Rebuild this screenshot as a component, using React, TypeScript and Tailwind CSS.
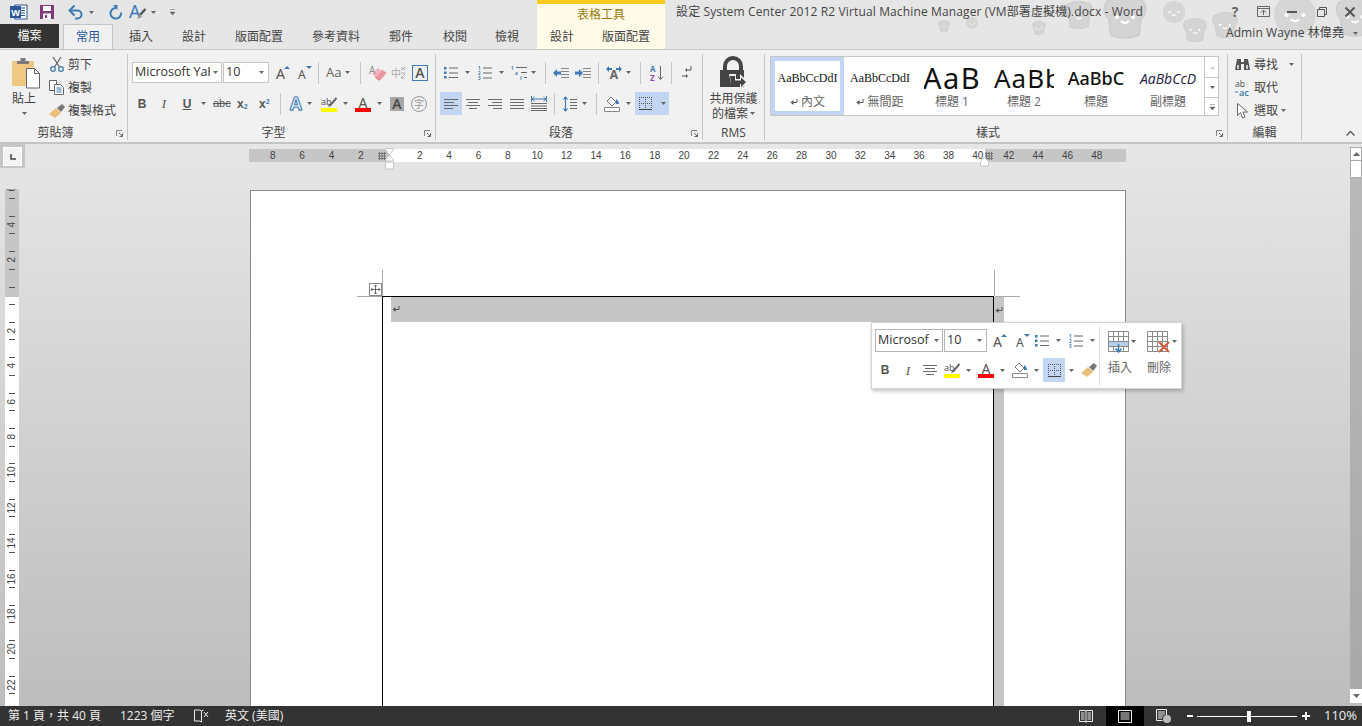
import React from "react";

type P = { w: number; h: number; children: React.ReactNode; className?: string };
const I = ({ w, h, children, className }: P) => (
  <svg width={w} height={h} viewBox={`0 0 ${w} ${h}`} className={`flex-none overflow-visible ${className ?? ""}`}>{children}</svg>
);
const Caret = ({ className = "" }: { className?: string }) => (
  <I w={5} h={3} className={className}><path d="M0 0h5L2.5 3z" fill="#666" /></I>
);
const Sep = ({ className = "" }: { className?: string }) => <div className={`w-px h-[22px] bg-[#c6c6c6] flex-none ${className}`} />;
const F = "Noto Sans, sans-serif";

const Word = () => (
  <I w={17} h={16}>
    <rect x="5" y="1" width="12" height="14" fill="#fff" stroke="#2b579a" />
    <path d="M10 4h5M10 6.5h5M10 9h5M10 11.5h5" stroke="#2b579a" />
    <rect x="0" y="2" width="11" height="12" fill="#2b579a" />
    <text x="5.5" y="11.5" fontSize="9" fontWeight="700" fill="#fff" textAnchor="middle" fontFamily={F}>W</text>
  </I>
);
const Save = () => (
  <I w={14} h={14}>
    <path d="M0 0h14v14H0z" fill="#80397b" />
    <rect x="3" y="1" width="8" height="5" fill="#fff" />
    <rect x="3" y="8.5" width="8" height="5.5" fill="#fff" />
    <rect x="5" y="10" width="2" height="3" fill="#80397b" />
  </I>
);
const Undo = () => (
  <I w={14} h={14}>
    <path d="M1.5 5.5h7a4 4 0 0 1 0 8H6" fill="none" stroke="#3e7bb5" strokeWidth="2" />
    <path d="M5.5 .5L.5 5.5l5 5" fill="none" stroke="#3e7bb5" strokeWidth="2" />
  </I>
);
const Redo = () => (
  <I w={13} h={14}>
    <path d="M7 3A5.300 5.300 0 1 0 12 7.500" fill="none" stroke="#3e7bb5" strokeWidth="2" />
    <path d="M4 0h4.500v5z" fill="#3e7bb5" />
  </I>
);
const ABrush = () => (
  <I w={16} h={17}>
    <text x="-1" y="14" fontSize="18" fill="#3e7bb5" fontFamily={F}>A</text>
    <path d="M15.500 5L10 11" stroke="#555" strokeWidth="2.500" />
    <path d="M10 10l-3 5 5-2z" fill="#999" />
  </I>
);
const More = () => (
  <I w={5} h={6}><path d="M0 .5h5M0 3h5L2.5 6z" fill="#666" stroke="#666" strokeWidth=".5" /></I>
);
const Paste = () => (
  <I w={28} h={31}>
    <rect x="0" y="3" width="22" height="25" fill="#efc881" />
    <path d="M5 3h12v3H5z" fill="#7a7a7a" />
    <rect x="8.5" y="0" width="5" height="4" fill="#7a7a7a" />
    <path d="M14.5 10.5h8l5 5v14.5h-13z" fill="#fff" stroke="#666" />
    <path d="M22.5 10.5v5h5" fill="none" stroke="#666" />
  </I>
);
const Scissors = () => (
  <I w={14} h={15}>
    <circle cx="3" cy="12" r="2.3" fill="none" stroke="#3e7bb5" strokeWidth="1.3" />
    <circle cx="11" cy="12" r="2.3" fill="none" stroke="#3e7bb5" strokeWidth="1.3" />
    <path d="M4.5 10L11 0M9.5 10L3 0" stroke="#666" strokeWidth="1.3" />
  </I>
);
const Copy = () => (
  <I w={15} h={15}>
    <path d="M.5.5h7v10h-7z" fill="#fff" stroke="#666" />
    <path d="M5.5 4.5h6l3 3v7h-9z" fill="#fff" stroke="#666" />
    <path d="M7.5 8h5M7.5 10h5M7.5 12h5" stroke="#3e7bb5" />
  </I>
);
const Brush = () => (
  <I w={16} h={14}>
    <path d="M0 10l7-6 5 5-6 5z" fill="#e8bf7d" />
    <path d="M8 4l5-4 3 3-4 5z" fill="#777" />
  </I>
);
const Grow = ({ up = true }: { up?: boolean }) => (
  <I w={14} h={16}>
    <text x="0" y="14" fontSize={up ? 14 : 12} fill="#555" fontFamily={F}>A</text>
    <path d={up ? "M8 4l3-3 3 3z" : "M8 1h6l-3 3z"} fill="#3e7bb5" />
  </I>
);
const Eraser = () => (
  <I w={17} h={16}>
    <path d="M6 12l7-7 4 3-6 7H9z" fill="#e8969f" stroke="#e8969f" />
    <path d="M3 9l6-6 4 3-6 6z" fill="#f2b5bb" />
    <text x="0" y="9" fontSize="10" fill="#8f8f8f" fontFamily={F}>A</text>
  </I>
);
const Boxed = () => (
  <div className="w-4 h-4 border border-[#3e7bb5] flex items-center justify-center text-[14px] leading-none text-[#555] font-semibold flex-none">A</div>
);
const AOutline = () => (
  <I w={14} h={15}>
    <text x="7" y="14" fontSize="17" fill="#fff" stroke="#3e7bb5" strokeWidth="1.1" fontWeight="700" textAnchor="middle" fontFamily={F}>A</text>
  </I>
);
const Highlight = () => (
  <I w={16} h={16}>
    <text x="0" y="9" fontSize="9" fill="#555" fontFamily={F}>ab</text>
    <path d="M15 1L8 9l-1 2 3-1 6-7z" fill="#666" />
    <rect x="0" y="12" width="16" height="4" fill="#ffff00" />
  </I>
);
const ARed = () => (
  <I w={16} h={16}>
    <text x="8" y="11.5" fontSize="14" fill="#555" textAnchor="middle" fontFamily={F}>A</text>
    <rect x="0" y="12" width="16" height="4" fill="#f00" />
  </I>
);
const AShade = () => (
  <div className="w-[14px] h-[14px] bg-[#a6a6a6] flex items-center justify-center text-[14px] leading-none font-semibold text-[#444] flex-none">A</div>
);
const Circle = () => (
  <div className="w-4 h-4 rounded-full border border-[#999] flex items-center justify-center text-[10px] leading-none text-[#999] flex-none">字</div>
);
const Bullets = () => (
  <I w={14} h={15}>
    <path d="M0 2h2.5v2.5H0zM0 6.5h2.5V9H0zM0 11h2.5v2.5H0z" fill="#3e7bb5" />
    <path d="M5 3h9M5 8h9M5 12.500h9" stroke="#666" />
  </I>
);
const Numbered = () => (
  <I w={14} h={15}>
    <text x="0" y="4.500" fontSize="4.500" fontWeight="700" fill="#3e7bb5" fontFamily={F}>1</text>
    <text x="0" y="9.500" fontSize="4.500" fontWeight="700" fill="#3e7bb5" fontFamily={F}>2</text>
    <text x="0" y="14.500" fontSize="4.500" fontWeight="700" fill="#3e7bb5" fontFamily={F}>3</text>
    <path d="M5 3h9M5 8h9M5 13h9" stroke="#666" />
  </I>
);
const Multi = () => (
  <I w={16} h={16}>
    <text x="0" y="4.500" fontSize="4.500" fontWeight="700" fill="#3e7bb5" fontFamily={F}>1</text>
    <text x="4" y="9.500" fontSize="4.500" fontWeight="700" fill="#3e7bb5" fontFamily={F}>a</text>
    <text x="9" y="14.500" fontSize="4.500" fontWeight="700" fill="#3e7bb5" fontFamily={F}>i</text>
    <path d="M5 2.500h11M10 7.500h6M13 12.500h3" stroke="#666" />
  </I>
);
const Indent = ({ rev = false }: { rev?: boolean }) => (
  <I w={16} h={10}>
    <path d="M8 .5h8M8 3.500h8M8 6.500h8M8 9.500h8" stroke="#888" />
    <path d={rev ? "M0 5l4-4v2.500h4v3H4V9z" : "M8 5L4 1v2.500H0v3h4V9z"} fill="#3e7bb5" />
  </I>
);
const Dir = () => (
  <I w={16} h={14}>
    <text x="8" y="13" fontSize="12" fontWeight="700" fill="#666" textAnchor="middle" fontFamily={F}>A</text>
    <path d="M0 3l3-3v2h3v2H3v2zM16 3l-3-3v2h-3v2h3v2z" fill="#3e7bb5" />
  </I>
);
const Sort = () => (
  <I w={14} h={16}>
    <text x="0" y="7" fontSize="8" fontWeight="700" fill="#3e7bb5" fontFamily={F}>A</text>
    <text x="0" y="15.500" fontSize="8" fontWeight="700" fill="#8a4fb5" fontFamily={F}>Z</text>
    <path d="M10.500 1v13M8 11.500l2.500 3 2.500-3" fill="none" stroke="#666" />
  </I>
);
const Pilcrow = () => (
  <I w={10} h={13}>
    <path d="M9 0v4H4" fill="none" stroke="#555" />
    <path d="M5 2L3 4l2 2z" fill="#555" />
    <path d="M0 10h5" stroke="#555" />
    <path d="M4 8l2 2-2 2z" fill="#555" />
  </I>
);
const Align = ({ kind }: { kind: "l" | "c" | "r" | "j" }) => {
  const d = {
    l: "M0 .5h14M0 3.500h10M0 6.500h14M0 9.500h9",
    c: "M0 .5h14M2 3.500h10M0 6.500h14M3 9.500h8",
    r: "M0 .5h14M4 3.500h10M0 6.500h14M5 9.500h9",
    j: "M0 .5h14M0 3.500h14M0 6.500h14M0 9.500h14",
  }[kind];
  return <I w={14} h={10}><path d={d} stroke="#6b6b6b" /></I>;
};
const Dist = () => (
  <I w={16} h={15}>
    <path d="M.5 0v6M15.500 0v6" stroke="#3e7bb5" />
    <path d="M1 3h14M3.500 1L1 3l2.500 2M12.500 1L15 3l-2.500 2" fill="none" stroke="#3e7bb5" />
    <path d="M0 7.500h16M0 10h16M0 12.500h16M0 14.500h16" stroke="#6b6b6b" />
  </I>
);
const LineSp = () => (
  <I w={14} h={16}>
    <path d="M2.500 1v14M.5 3.500l2-2.500 2 2.500M.5 12.500l2 2.500 2-2.500" fill="none" stroke="#3e7bb5" strokeWidth="1.200" />
    <path d="M7 3.500h7M7 6.500h7M7 9.500h7M7 12.500h7" stroke="#6b6b6b" />
  </I>
);
const Shading = () => (
  <I w={16} h={16}>
    <path d="M7 1l5 5-4 4-5-5z" fill="#fff" stroke="#777" />
    <path d="M12 3c2 1 3 3 3 5h-3z" fill="#3e7bb5" />
    <path d="M.5 11.500h15v4H.5z" fill="#fff" stroke="#888" />
  </I>
);
const Borders = () => (
  <I w={13} h={13}>
    <path d="M.5 0v12M12.500 0v12M0 .5h13" stroke="#555" strokeDasharray="1 1" />
    <path d="M0 6.500h13M6.500 0v12" stroke="#555" strokeDasharray="1 1" />
    <path d="M0 12.500h13" stroke="#444" />
  </I>
);
const Lock = () => (
  <I w={28} h={32}>
    <path d="M5 13V8a8 8 0 0 1 16 0v5" fill="none" stroke="#444" strokeWidth="4" />
    <path d="M0 12h24v17H0z" fill="#444" />
    <path d="M9 16h7v5h4v-5l8 8-8 8v-6h-9z" fill="#f1f1f1" />
    <path d="M10 18h5v4.500h6v-3l5 4.500-5 5v-3h-10z" fill="#444" />
  </I>
);
const Bino = () => (
  <I w={15} h={13}>
    <path d="M2 1h4v3h3V1h4l2 11H9V6H6v6H0z" fill="#555" />
    <path d="M2 7h2v4H2zM11 7h2v4h-2z" fill="#ccc" />
  </I>
);
const AbAc = () => (
  <I w={16} h={16}>
    <text x="0" y="7" fontSize="8.500" fill="#555" fontFamily={F}>ab</text>
    <text x="4" y="15.500" fontSize="9" fontWeight="600" fill="#3e7bb5" fontFamily={F}>ac</text>
    <path d="M0 12h3" stroke="#3e7bb5" />
  </I>
);
const Cursor = () => (
  <I w={11} h={16}>
    <path d="M.5.5v12l3-3 2 5.500 2.500-1-2-5h4.500z" fill="#fff" stroke="#666" />
  </I>
);
const Launcher = () => (
  <I w={7} h={7}>
    <path d="M.5 6V.5H6" fill="none" stroke="#888" />
    <path d="M3 3l3.500 3.500M6.500 3.500v3h-3" fill="none" stroke="#666" />
  </I>
);
const Mark = () => (
  <I w={8} h={7}>
    <path d="M7 0v3.500H2" fill="none" stroke="#555" />
    <path d="M3.500 1L.5 3.500 3.500 6z" fill="#555" />
  </I>
);
const Grid = () => (
  <I w={8} h={8} className="opacity-70">
    <path d="M0 1.500h8M0 4h8M0 6.500h8M1.500 0v8M4 0v8M6.500 0v8" stroke="#555" />
  </I>
);
const TableIcon = ({ kind }: { kind: "ins" | "del" }) => (
  <I w={24} h={22}>
    <path d="M.5.5h20v20H.5zM.5 5.500h20M.5 10.500h20M.5 15.500h20M5.500.5v20M10.500.5v20M15.500.5v20" fill="none" stroke="#8a8a8a" />
    {kind === "ins" ? (
      <>
        <rect x="1" y="11" width="19" height="4" fill="#b7cdea" />
        <path d="M10.500 13v7M7.500 17.500l3 3.500 3-3.500" fill="none" stroke="#3e7bb5" strokeWidth="1.500" />
      </>
    ) : (
      <path d="M12 11l10 10M22 11L12 21" stroke="#d9573c" strokeWidth="2" />
    )}
  </I>
);

const Cell = ({ n }: { n: number }) => (
  <div className="w-[29.38px] flex-none text-center text-[10px] leading-[13px] text-[#444] font-['Liberation_Sans',sans-serif]">{n}</div>
);

const Tab = ({ t, c, cls = "" }: { t: string; c: string; cls?: string }) => (
  <div className={`${c} flex-none flex items-center justify-center text-[12px] text-[#444] ${cls}`}>{t}</div>
);

const Toast = ({ x, y, s, apple }: { x: number; y: number; s: number; apple?: boolean }) => (
  <g transform={`translate(${x} ${y}) scale(${s})`}>
    {apple ? <circle r="10" fill="#d6d6d6" /> : <path d="M-9-8q9-5 18 0q3 5-1 9l-1 8q-7 3-14 0l-1-8q-4-4-1-9z" fill="#d4d4d4" stroke="#cfcfcf" />}
    <circle cx="-4" cy="0" r="1" fill="#fff" />
    <circle cx="4" cy="0" r="1" fill="#fff" />
    <path d="M-2 2q2 2 4 0" fill="none" stroke="#fff" />
  </g>
);

const Group = ({ c, label, launcher = true, children }: { c: string; label: string; launcher?: boolean; children: React.ReactNode }) => (
  <div className={`${c} h-[86px] flex-none flex flex-col border-r border-[#c6c6c6]`}>
    {children}
    <div className="mt-auto h-[16px] -mb-[1px] flex items-center text-[12px] text-[#444]">
      <div className="flex-1 text-center leading-none">{label}</div>
      {launcher && <div className="w-4 flex items-center justify-center"><Launcher /></div>}
    </div>
  </div>
);

const Small = ({ icon, t, after }: { icon: React.ReactNode; t: string; after?: React.ReactNode }) => (
  <div className="h-[23px] flex items-center text-[12px] text-[#444]">
    <div className="w-[17px] flex justify-center flex-none">{icon}</div>
    <div className="ml-[3px]">{t}</div>
    {after}
  </div>
);

const StyleItem = ({ s, l, sel = false, c, mark = false, inner = "w-full" }: { s: string; l: string; sel?: boolean; c: string; mark?: boolean; inner?: string }) => (
  <div className={`${sel ? "w-[73px] border-[4px] border-[#c2d5f2]" : "w-[72px] border-[4px] border-white"} flex-none h-full flex flex-col items-center overflow-hidden bg-white`}>
    <div className={`mt-[2px] h-[30px] ${inner} flex items-center justify-center overflow-hidden whitespace-nowrap ${c}`}>{s}</div>
    <div className="text-[12px] leading-[16px] text-[#666] mt-[1px] whitespace-nowrap flex items-center gap-[3px]">{mark && <Mark />}{l}</div>
  </div>
);

const VCell = ({ n }: { n?: number }) => (
  <div className="h-[35.38px] flex-none flex flex-col items-center justify-center">
    <div className="w-[6px] h-px bg-[#555]" />
    <div className="h-[16.6px] flex items-center justify-center text-[10px] leading-none text-[#444] [writing-mode:vertical-rl] rotate-180">{n ?? ""}</div>
    <div className="w-[6px] h-px bg-[#555]" />
  </div>
);

export default function App() {
  const left = [8, 6, 4, 2];
  const mid = Array.from({ length: 20 }, (_, i) => (i + 1) * 2);
  const right = [42, 44, 46, 48];
  return (
    <div className="w-[1362px] h-[726px] overflow-hidden flex flex-col font-['Open_Sans','Noto_Sans_CJK_TC',sans-serif] bg-[#e6e6e6] relative">
      {/* header */}
      <div className="relative h-[50px] flex-none flex bg-[#e6e6e6] border-b border-[#c6c6c6]">
        <svg width="480" height="50" viewBox="0 0 480 50" className="absolute right-0 top-0">
          <Toast x={62} y={26} s={0.55} />
          <Toast x={90} y={23} s={0.6} apple />
          <Toast x={157} y={28} s={0.65} />
          <Toast x={197} y={15} s={1.3} />
          <Toast x={243} y={17} s={2} />
          <Toast x={292} y={12} s={1.1} apple />
          <Toast x={313} y={30} s={1.1} />
          <Toast x={343} y={25} s={1.2} />
          <Toast x={413} y={15} s={2.1} apple />
          <Toast x={473} y={17} s={1.8} />
        </svg>
        <div className="w-[537px] flex-none flex flex-col relative">
          <div className="h-[25px] flex items-center pl-[10px]">
            <Word />
            <div className="ml-[13px]"><Save /></div>
            <div className="ml-[15px]"><Undo /></div>
            <Caret className="ml-[6px]" />
            <div className="ml-[15px]"><Redo /></div>
            <div className="ml-[8px]"><ABrush /></div>
            <Caret className="ml-[5px]" />
            <div className="ml-[14px] flex"><More /></div>
          </div>
          <div className="h-[25px] flex">
            <div className="w-[59px] h-[24px] flex-none bg-[#333] text-white text-[12px] flex items-center justify-center">檔案</div>
            <div className="ml-[4px] w-[50px] h-[25px] flex-none bg-[#f1f1f1] border border-b-0 border-[#c6c6c6] text-[#2b579a] text-[12px] flex items-center justify-center">常用</div>
            <Tab t="插入" c="w-[56px]" />
            <Tab t="設計" c="w-[50px]" />
            <Tab t="版面配置" c="w-[80px]" />
            <Tab t="參考資料" c="w-[74px]" />
            <Tab t="郵件" c="w-[56px]" />
            <Tab t="校閱" c="w-[52px]" />
            <Tab t="檢視" c="w-[52px]" />
          </div>
        </div>
        <div className="w-[128px] flex-none flex flex-col bg-[#fffbe8] border-t-4 border-[#f5cc1f] relative">
          <div className="h-[21px] flex items-center justify-center text-[12px] text-[#a07a12]">表格工具</div>
          <div className="h-[24px] flex">
            <Tab t="設計" c="w-[50px]" />
            <Tab t="版面配置" c="w-[78px]" />
          </div>
        </div>
        <div className="flex-1 flex flex-col relative min-w-0">
          <div className="h-[23px] flex items-center">
            <div className="ml-[11px] flex-1 text-[12px] tracking-[0.13px] text-[#444] whitespace-nowrap">設定 System Center 2012 R2 Virtual Machine Manager (VM部署虛擬機).docx - Word</div>
            <div className="w-[28px] flex justify-center text-[14px] font-bold text-[#666]">?</div>
            <div className="w-[28px] flex justify-center">
              <I w={13} h={11}><path d="M.5.5h12v10H.5zM.5 2.500h12" fill="none" stroke="#666" /><path d="M6.500 9V4.500M4 6.500l2.500-2.500L9 6.500" fill="none" stroke="#666" /></I>
            </div>
            <div className="w-[29px] flex justify-center"><I w={10} h={2}><rect width="10" height="2" fill="#555" /></I></div>
            <div className="w-[31px] flex justify-center">
              <I w={10} h={10}><path d="M.5 2.500h7v7h-7zM2.500 2.500v-2h7v7h-2" fill="none" stroke="#555" /></I>
            </div>
            <div className="w-[25px] flex justify-center">
              <I w={10} h={10}><path d="M.5.5l9 9M9.500.5l-9 9" stroke="#555" strokeWidth="2" /></I>
            </div>
          </div>
          <div className="h-[20px] flex items-center justify-end pr-[4px]">
            <span className="text-[12px] text-[#444] whitespace-nowrap tracking-[0.1px]">Admin Wayne 林偉堯</span>
            <Caret className="ml-[9px]" />
          </div>
        </div>
      </div>

      {/* ribbon */}
      <div className="h-[94px] flex-none bg-[#f1f1f1] border-b-2 border-[#c4c4c4] flex pt-[4px] relative">
        <Group c="w-[128px]" label="剪貼簿">
          <div className="flex">
            <div className="w-[48px] flex flex-col items-center">
              <div className="mt-[4px] ml-[4px]"><Paste /></div>
              <div className="text-[12px] leading-[16px] text-[#444] mt-[2px]">貼上</div>
              <Caret className="mt-[5px]" />
            </div>
            <div className="flex flex-col -mt-[1px]">
              <Small icon={<Scissors />} t="剪下" />
              <Small icon={<Copy />} t="複製" />
              <Small icon={<Brush />} t="複製格式" />
            </div>
          </div>
        </Group>

        <Group c="w-[308px]" label="字型">
          <div className="mt-[8px] h-[21px] flex items-center">
            <div className="ml-[4px] w-[90px] h-[21px] flex-none bg-white border border-[#c6c6c6] flex items-center pl-[2px] text-[12.500px] text-[#333] overflow-hidden whitespace-nowrap">
              <span className="w-[75px] overflow-hidden">Microsoft YaHei</span><Caret className="ml-[3px]" />
            </div>
            <div className="ml-px w-[46px] h-[21px] flex-none bg-white border border-[#c6c6c6] flex items-center pl-[2px] text-[12.500px] text-[#333]">
              10<Caret className="ml-auto mr-[4px]" />
            </div>
            <div className="ml-[7px]"><Grow /></div>
            <div className="ml-[8px]"><Grow up={false} /></div>
            <Sep className="ml-[6px]" />
            <div className="ml-[7px] w-[15px] text-[13px] text-[#666] leading-none whitespace-nowrap">Aa</div>
            <Caret className="ml-[4px]" />
            <Sep className="ml-[10px]" />
            <div className="ml-[8px]"><Eraser /></div>
            <div className="ml-[5px] w-[15px] flex items-center text-[10px] leading-none text-[#aaa] whitespace-nowrap">
              中
              <I w={5} h={13}><path d="M0 1l4 3M4 1L0 4M0 7h4M0 12l4-4M0 12h4" fill="none" stroke="#aaa" /></I>
            </div>
            <div className="ml-[6px]"><Boxed /></div>
          </div>
          <div className="mt-[9px] h-[23px] flex items-center text-[#555]">
            <div className="ml-[9px] w-[10px] text-[12px] font-bold text-center leading-none font-['Liberation_Sans',sans-serif]">B</div>
            <div className="ml-[13px] w-[8px] text-[13px] italic text-center leading-none font-['Liberation_Serif',serif]">I</div>
            <div className="ml-[14px] w-[10px] text-[12px] font-bold underline text-center leading-none font-['Liberation_Sans',sans-serif]">U</div>
            <Caret className="ml-[9px]" />
            <div className="ml-[7px] w-[16px] text-[11px] line-through leading-none text-center font-['Liberation_Sans',sans-serif]">abc</div>
            <div className="ml-[8px] w-[13px] text-[12px] font-bold leading-none whitespace-nowrap font-['Liberation_Sans',sans-serif]">x<sub className="text-[7px] text-[#3e7bb5]">2</sub></div>
            <div className="ml-[9px] w-[13px] text-[12px] font-bold leading-none whitespace-nowrap font-['Liberation_Sans',sans-serif]">x<sup className="text-[7px] text-[#3e7bb5]">2</sup></div>
            <Sep className="ml-[8px]" />
            <div className="ml-[8px]"><AOutline /></div>
            <Caret className="ml-[4px]" />
            <div className="ml-[9px]"><Highlight /></div>
            <Caret className="ml-[6px]" />
            <div className="ml-[7px]"><ARed /></div>
            <Caret className="ml-[6px]" />
            <div className="ml-[8px]"><AShade /></div>
            <div className="ml-[7px]"><Circle /></div>
          </div>
        </Group>

        <Group c="w-[267px]" label="段落">
          <div className="mt-[8px] h-[21px] flex items-center">
            <div className="ml-[8px]"><Bullets /></div>
            <Caret className="ml-[7px]" />
            <div className="ml-[8px]"><Numbered /></div>
            <Caret className="ml-[7px]" />
            <div className="ml-[7px]"><Multi /></div>
            <Caret className="ml-[4px]" />
            <Sep className="ml-[9px]" />
            <div className="ml-[7px]"><Indent rev /></div>
            <div className="ml-[6px]"><Indent /></div>
            <Sep className="ml-[7px]" />
            <div className="ml-[7px]"><Dir /></div>
            <Caret className="ml-[4px]" />
            <Sep className="ml-[9px]" />
            <div className="ml-[9px]"><Sort /></div>
            <Sep className="ml-[7px]" />
            <div className="ml-[10px]"><Pilcrow /></div>
          </div>
          <div className="mt-[9px] h-[23px] flex items-center">
            <div className="ml-[4px] w-[22px] h-[23px] bg-[#c2d5f2] flex items-center justify-center flex-none"><Align kind="l" /></div>
            <div className="ml-[4px]"><Align kind="c" /></div>
            <div className="ml-[8px]"><Align kind="r" /></div>
            <div className="ml-[8px]"><Align kind="j" /></div>
            <div className="ml-[7px]"><Dist /></div>
            <Sep className="ml-[7px]" />
            <div className="ml-[8px]"><LineSp /></div>
            <Caret className="ml-[5px]" />
            <Sep className="ml-[9px]" />
            <div className="ml-[7px]"><Shading /></div>
            <Caret className="ml-[6px]" />
            <div className="ml-[4px] w-[34px] h-[23px] bg-[#c2d5f2] flex items-center flex-none pl-[4px]"><Borders /><Caret className="ml-[9px]" /></div>
          </div>
        </Group>

        <Group c="w-[62px]" label="RMS" launcher={false}>
          <div className="flex flex-col items-center">
            <div className="mt-[4px]"><Lock /></div>
            <div className="text-[12px] leading-[15px] text-[#444] mt-[1px] whitespace-nowrap">共用保護</div>
            <div className="text-[12px] leading-[15px] text-[#444] flex items-center whitespace-nowrap">的檔案<Caret className="ml-[2px]" /></div>
          </div>
        </Group>

        <Group c="w-[463px]" label="樣式">
          <div className="ml-[5px] mt-[2px] w-[449px] h-[60px] flex-none border border-[#c6c6c6] bg-white flex">
            <StyleItem c="text-[12px] font-['Liberation_Serif',serif] text-[#111]" s="AaBbCcDdI" l="內文" mark sel />
            <StyleItem c="text-[12px] font-['Liberation_Serif',serif] text-[#111]" s="AaBbCcDdI" l="無間距" mark />
            <StyleItem c="text-[29px] font-['Noto_Sans',sans-serif] text-[#111] tracking-[1.500px]" inner="w-[56px]" s="AaB" l="標題 1" />
            <StyleItem c="text-[26px] font-['Noto_Sans',sans-serif] text-[#111] tracking-[1px] !justify-start" inner="w-[60px]" s="AaBb" l="標題 2" />
            <StyleItem c="text-[18px] font-['Noto_Sans',sans-serif] font-medium text-[#111]" s="AaBbC" l="標題" />
            <StyleItem c="text-[14px] italic font-['Open_Sans',sans-serif] text-[#224]" s="AaBbCcD" l="副標題" />
            <div className="ml-auto w-[15px] flex-none border-l border-[#c6c6c6] flex flex-col">
              <div className="h-[21px] border-b border-[#c6c6c6] flex items-center justify-center"><I w={5} h={3}><path d="M0 3h5L2.500 0z" fill="#ccc" /></I></div>
              <div className="h-[20px] border-b border-[#c6c6c6] flex items-center justify-center"><Caret /></div>
              <div className="flex-1 flex items-center justify-center"><More /></div>
            </div>
          </div>
        </Group>

        <Group c="w-[74px]" label="編輯" launcher={false}>
          <div className="flex flex-col -mt-[1px] pl-[6px]">
            <Small icon={<Bino />} t="尋找" after={<Caret className="ml-[11px]" />} />
            <Small icon={<AbAc />} t="取代" />
            <Small icon={<Cursor />} t="選取" after={<Caret className="ml-[3px]" />} />
          </div>
        </Group>

        <div className="flex-1 flex items-end justify-end pr-[7px] pb-[6px]">
          <I w={9} h={5}><path d="M.5 4.500l4-4 4 4" fill="none" stroke="#555" strokeWidth="1.300" /></I>
        </div>
      </div>

      {/* document */}
      <div className="flex-1 min-h-0 relative flex bg-[linear-gradient(to_bottom,#e6e6e6,#bdbdbd)] overflow-hidden">
        <div className="w-[249px] flex-none flex flex-col">
          <div className="w-[25px] h-[24px] bg-[#c6c6c6] pt-[3px] pl-[3px]">
            <div className="w-[19px] h-[19px] bg-[#f3f3f3] border border-white flex items-center justify-center">
              <I w={6} h={6}><path d="M1 0v5h5" fill="none" stroke="#444" strokeWidth="1.500" /></I>
            </div>
          </div>
          <div className="ml-[5px] mt-[21px] w-[14px] h-[517px] overflow-hidden bg-[linear-gradient(to_bottom,#c6c6c6_108px,#fff_108px)] font-['Liberation_Sans',sans-serif]">
            <div className="-mt-[17px]">
              <VCell n={6} /><VCell n={4} /><VCell n={2} /><VCell />
              {[2, 4, 6, 8, 10, 12, 14, 16, 18, 20, 22].map((n) => <VCell key={n} n={n} />)}
            </div>
          </div>
        </div>

        <div className="w-[877px] flex-none flex flex-col">
          <div className="mt-[5px] h-[13px] flex-none flex relative">
            <div className="w-[141px] bg-[#c6c6c6] flex pl-[9px] relative">
              {left.map((n) => <Cell key={n} n={n} />)}
              <div className="flex items-center ml-[2px]"><Grid /></div>
            </div>
            <div className="w-[595px] bg-white flex pl-[15px]">
              {mid.map((n) => <Cell key={n} n={n} />)}
            </div>
            <div className="flex-1 bg-[#c6c6c6] flex">
              <div className="w-[9px] flex-none flex items-center"><Grid /></div>
              {right.map((n) => <Cell key={n} n={n} />)}
            </div>
            <svg width="10" height="22" viewBox="0 0 10 22" className="absolute left-[136px] -top-[1px]">
              <path d="M.5.5h8v1L4.500 7 8.500 12v1h-8v-1L4.500 7 .5 1.500z" fill="#fff" stroke="#c6c6c6" />
              <path d="M.5 14h8v7h-8z" fill="#fff" stroke="#c6c6c6" />
            </svg>
            <svg width="10" height="10" viewBox="0 0 10 10" className="absolute left-[731px] top-[8px]">
              <path d="M.5 9V4.500L4.500 .5l4 4V9z" fill="#fff" stroke="#c6c6c6" />
            </svg>
          </div>
          <div className="ml-px mt-[28px] flex-1 bg-white border-l border-r border-t border-[#8a8a8a] relative">
            <div className="ml-[131px] mt-[105px] h-[500px] flex relative">
              <div className="w-[612px] flex-none border-[1.500px] border-b-0 border-black">
                <div className="ml-[7.500px] h-[25px] bg-[#c6c6c6] pl-px pt-[9px]"><Mark /></div>
              </div>
              <div className="w-[10px] flex-none bg-[#c6c6c6] mt-px pl-[1px] pt-[10px]"><Mark /></div>
              <div className="absolute -top-[26px] left-0 w-px h-[26px] bg-[#aaa]" />
              <div className="absolute top-0 -left-[25px] w-[25px] h-px bg-[#aaa]" />
              <div className="absolute -top-[26px] left-[612px] w-px h-[26px] bg-[#aaa]" />
              <div className="absolute top-0 left-[613px] w-[25px] h-px bg-[#aaa]" />
              <div className="absolute -top-[13px] -left-[13px] w-[13px] h-[13px] bg-white border border-[#888] flex items-center justify-center">
                <I w={9} h={9}><path d="M4.500 0v9M0 4.500h9M3 1.500L4.500 0 6 1.500M3 7.500L4.500 9 6 7.500M1.500 3L0 4.500 1.500 6M7.500 3L9 4.500 7.500 6" fill="none" stroke="#444" strokeWidth=".8" /></I>
              </div>
            </div>
          </div>
        </div>

        <div className="flex-1 flex justify-end">
          <div className="w-[12px] flex flex-col pt-[3px] pb-[3px] h-full">
            <div className="h-[14px] bg-white border border-[#aaa] flex items-center justify-center"><I w={7} h={4}><path d="M0 4h7L3.500 0z" fill="#666" /></I></div>
            <div className="h-[17px] bg-white border border-[#aaa] border-t-0" />
            <div className="flex-1 bg-[linear-gradient(to_bottom,#b9b9b9,#a9a9a9)]" />
            <div className="h-[14px] bg-white flex items-center justify-center"><I w={7} h={4}><path d="M0 0h7L3.500 4z" fill="#666" /></I></div>
          </div>
        </div>

        {/* mini toolbar */}
        <div className="absolute left-[871px] top-[178px] w-[311px] h-[67px] bg-white border border-[#d4d4d4] shadow-[1px_2px_4px_rgba(0,0,0,0.25)] flex">
          <div className="w-[227px] flex-none flex flex-col">
            <div className="mt-[6px] h-[23px] flex items-center">
              <div className="ml-[3px] w-[68px] h-[23px] flex-none border border-[#b5b5b5] flex items-center pl-[2px] text-[12.500px] text-[#333] overflow-hidden whitespace-nowrap">
                <span className="w-[51px] overflow-hidden">Microsoft</span><Caret className="ml-[5px]" />
              </div>
              <div className="ml-px w-[43px] h-[23px] flex-none border border-[#b5b5b5] flex items-center pl-[2px] text-[12.500px] text-[#333]">
                10<Caret className="ml-auto mr-[4px]" />
              </div>
              <div className="ml-[6px]"><Grow /></div>
              <div className="ml-[9px]"><Grow up={false} /></div>
              <div className="ml-[5px]"><Bullets /></div>
              <Caret className="ml-[7px]" />
              <div className="ml-[8px]"><Numbered /></div>
              <Caret className="ml-[7px]" />
            </div>
            <div className="mt-[6px] h-[24px] flex items-center text-[#555]">
              <div className="ml-[8px] w-[10px] text-[12px] font-bold text-center leading-none font-['Liberation_Sans',sans-serif]">B</div>
              <div className="ml-[14px] w-[8px] text-[13px] italic text-center leading-none font-['Liberation_Serif',serif]">I</div>
              <div className="ml-[11px]"><Align kind="c" /></div>
              <div className="ml-[7px]"><Highlight /></div>
              <Caret className="ml-[6px]" />
              <div className="ml-[7px]"><ARed /></div>
              <Caret className="ml-[6px]" />
              <div className="ml-[7px]"><Shading /></div>
              <Caret className="ml-[6px]" />
              <div className="ml-[4px] w-[22px] h-[24px] bg-[#c2d5f2] flex items-center justify-center flex-none"><Borders /></div>
              <Caret className="ml-[4px]" />
              <div className="ml-[7px]"><Brush /></div>
            </div>
          </div>
          <div className="w-px h-[59px] bg-[#e0e0e0] mt-[3px] flex-none" />
          <div className="flex ml-[8px]">
            <div className="w-[39px] flex flex-col">
              <div className="mt-[7px] h-[23px] flex items-center"><TableIcon kind="ins" /><Caret className="-ml-[1px]" /></div>
              <div className="text-[12px] leading-[16px] text-[#666] mt-[7px] whitespace-nowrap">插入</div>
            </div>
            <div className="w-[34px] flex flex-col">
              <div className="mt-[7px] h-[23px] flex items-center"><TableIcon kind="del" /><Caret className="ml-[1px]" /></div>
              <div className="text-[12px] leading-[16px] text-[#666] mt-[7px] whitespace-nowrap">刪除</div>
            </div>
          </div>
        </div>
      </div>

      {/* status bar */}
      <div className="h-[20px] flex-none bg-[#333] flex items-center text-[12px] text-[#eee] relative">
        <div className="ml-[8px] w-[112px] whitespace-nowrap">第 1 頁，共 40 頁</div>
        <div className="w-[74px] whitespace-nowrap">1223 個字</div>
        <I w={15} h={14}>
          <path d="M.5 1h5l2 1v11l-2-1h-5zM7.500 2l2-1" fill="none" stroke="#eee" />
          <path d="M10 3l4 5M14 3l-4 5" stroke="#eee" />
        </I>
        <div className="ml-[16px] whitespace-nowrap">英文 (美國)</div>
        <div className="ml-auto flex items-center h-full">
          <I w={14} h={13}>
            <path d="M.5.5h6l.5 1 .5-1h6v11h-6l-.5 1-.5-1h-6zM7 1.500v10" fill="none" stroke="#eee" />
            <path d="M2 3h3.500M2 5h3.500M2 7h3.500M2 9h3.500M8.500 3H12M8.500 5H12M8.500 7H12M8.500 9H12" stroke="#eee" />
          </I>
          <div className="ml-[13px] w-[38px] h-full bg-black flex items-center justify-center">
            <I w={14} h={13}><path d="M.5.5h13v12H.5z" fill="none" stroke="#eee" /><path d="M2.500 3h9M2.500 5h9M2.500 7h9M2.500 9h9" stroke="#eee" /></I>
          </div>
          <div className="ml-[12px]">
            <I w={15} h={14}>
              <path d="M.5.5h10v7M.5.5v11h6" fill="none" stroke="#eee" />
              <path d="M2 3h7M2 5h7M2 7h5M2 9h4" stroke="#eee" />
              <circle cx="11" cy="10" r="4" fill="#bbb" />
            </I>
          </div>
          <div className="ml-[16px] w-[6px] h-[2px] bg-white" />
          <div className="ml-[4px] w-[100px] h-px bg-white relative">
            <div className="absolute left-[50px] -top-[5px] w-[4px] h-[11px] bg-white" />
          </div>
          <div className="ml-[5px] w-[8px] flex justify-center">
            <I w={8} h={8}><path d="M0 4h8M4 0v8" stroke="#fff" strokeWidth="2" /></I>
          </div>
          <div className="ml-[14px] mr-[5px] text-[13px]">110%</div>
        </div>
      </div>
    </div>
  );
}
